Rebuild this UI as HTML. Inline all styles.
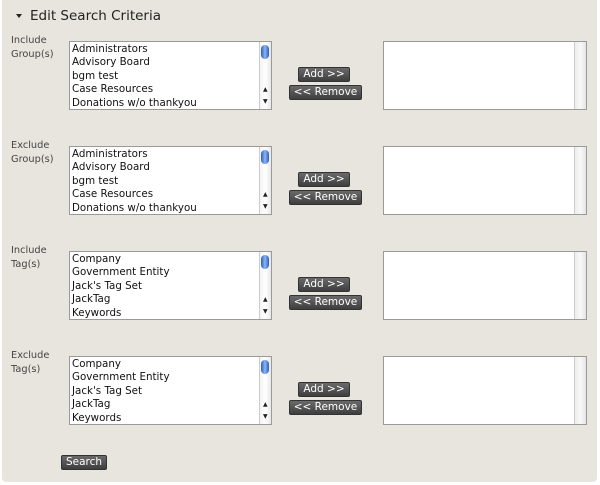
<!DOCTYPE html>
<html><head><style>
body{margin:0;width:600px;height:485px;background:#fff;font-family:"DejaVu Sans","Liberation Sans",sans-serif;overflow:hidden}
.panel{position:absolute;left:2px;top:0;width:595px;height:482px;background:#e7e5dd;border-radius:0 0 4px 4px}
.title{position:absolute;left:30px;top:8px;font-size:13.5px;color:#222}
.tri{position:absolute;left:16px;top:14px;width:0;height:0;border-left:3px solid transparent;border-right:3px solid transparent;border-top:4px solid #222}
.lbl{position:absolute;left:11px;font-size:9.8px;color:#444;line-height:14px}
.box{position:absolute;left:69px;width:201px;height:67px;background:#fff;border:1px solid #9a9a9a;overflow:hidden}
.box .t{padding-top:1px}
.box .t div{font-size:10.3px;color:#111;line-height:13.4px;padding-left:2px;white-space:nowrap}
.sb{position:absolute;right:0;top:0;width:11px;height:67px;background:linear-gradient(90deg,#f4f4f4,#fff,#e8e8e8);border-left:1px solid #ccc}
.thumb{position:absolute;left:1px;top:3px;width:8px;height:14px;border-radius:4px;background:linear-gradient(90deg,#2a5dc0,#8db5f0,#2a5dc0)}
.ar{position:absolute;left:3px;font-size:6px;color:#222}
.rbox{position:absolute;left:383px;width:202px;height:67px;background:#fff;border:1px solid #9a9a9a}
.rbox .sb{background:linear-gradient(90deg,#eee,#f8f8f8,#e4e4e4)}
.btn{position:absolute;height:13px;background:linear-gradient(#6a6a6a,#3e3e3e);color:#fff;font-size:10.5px;line-height:13px;text-align:center;border-radius:2px;border:1px solid #333}
</style></head><body>
<div class="panel"></div>
<div class="tri"></div>
<div class="title">Edit Search Criteria</div>

<div class="lbl" style="top:34px">Include<br>Group(s)</div>
<div class="box" style="top:41px"><div class="t"><div>Administrators</div><div>Advisory Board</div><div>bgm test</div><div>Case Resources</div><div>Donations w/o thankyou</div></div><div class="sb"><span class="thumb"></span><span class="ar" style="top:44px">▲</span><span class="ar" style="top:56px">▼</span></div></div>
<div class="btn" style="left:298px;top:67px;width:50px">Add &gt;&gt;</div>
<div class="btn" style="left:289px;top:85px;width:71px">&lt;&lt; Remove</div>
<div class="rbox" style="top:41px"><div class="sb"></div></div>

<div class="lbl" style="top:139px">Exclude<br>Group(s)</div>
<div class="box" style="top:146px"><div class="t"><div>Administrators</div><div>Advisory Board</div><div>bgm test</div><div>Case Resources</div><div>Donations w/o thankyou</div></div><div class="sb"><span class="thumb"></span><span class="ar" style="top:44px">▲</span><span class="ar" style="top:56px">▼</span></div></div>
<div class="btn" style="left:298px;top:172px;width:50px">Add &gt;&gt;</div>
<div class="btn" style="left:289px;top:190px;width:71px">&lt;&lt; Remove</div>
<div class="rbox" style="top:146px"><div class="sb"></div></div>

<div class="lbl" style="top:244px">Include<br>Tag(s)</div>
<div class="box" style="top:251px"><div class="t"><div>Company</div><div>Government Entity</div><div>Jack's Tag Set</div><div>JackTag</div><div>Keywords</div></div><div class="sb"><span class="thumb"></span><span class="ar" style="top:44px">▲</span><span class="ar" style="top:56px">▼</span></div></div>
<div class="btn" style="left:298px;top:277px;width:50px">Add &gt;&gt;</div>
<div class="btn" style="left:289px;top:295px;width:71px">&lt;&lt; Remove</div>
<div class="rbox" style="top:251px"><div class="sb"></div></div>

<div class="lbl" style="top:349px">Exclude<br>Tag(s)</div>
<div class="box" style="top:356px"><div class="t"><div>Company</div><div>Government Entity</div><div>Jack's Tag Set</div><div>JackTag</div><div>Keywords</div></div><div class="sb"><span class="thumb"></span><span class="ar" style="top:44px">▲</span><span class="ar" style="top:56px">▼</span></div></div>
<div class="btn" style="left:298px;top:382px;width:50px">Add &gt;&gt;</div>
<div class="btn" style="left:289px;top:400px;width:71px">&lt;&lt; Remove</div>
<div class="rbox" style="top:356px"><div class="sb"></div></div>

<div class="btn" style="left:61px;top:455px;width:44px">Search</div>
</body></html>
